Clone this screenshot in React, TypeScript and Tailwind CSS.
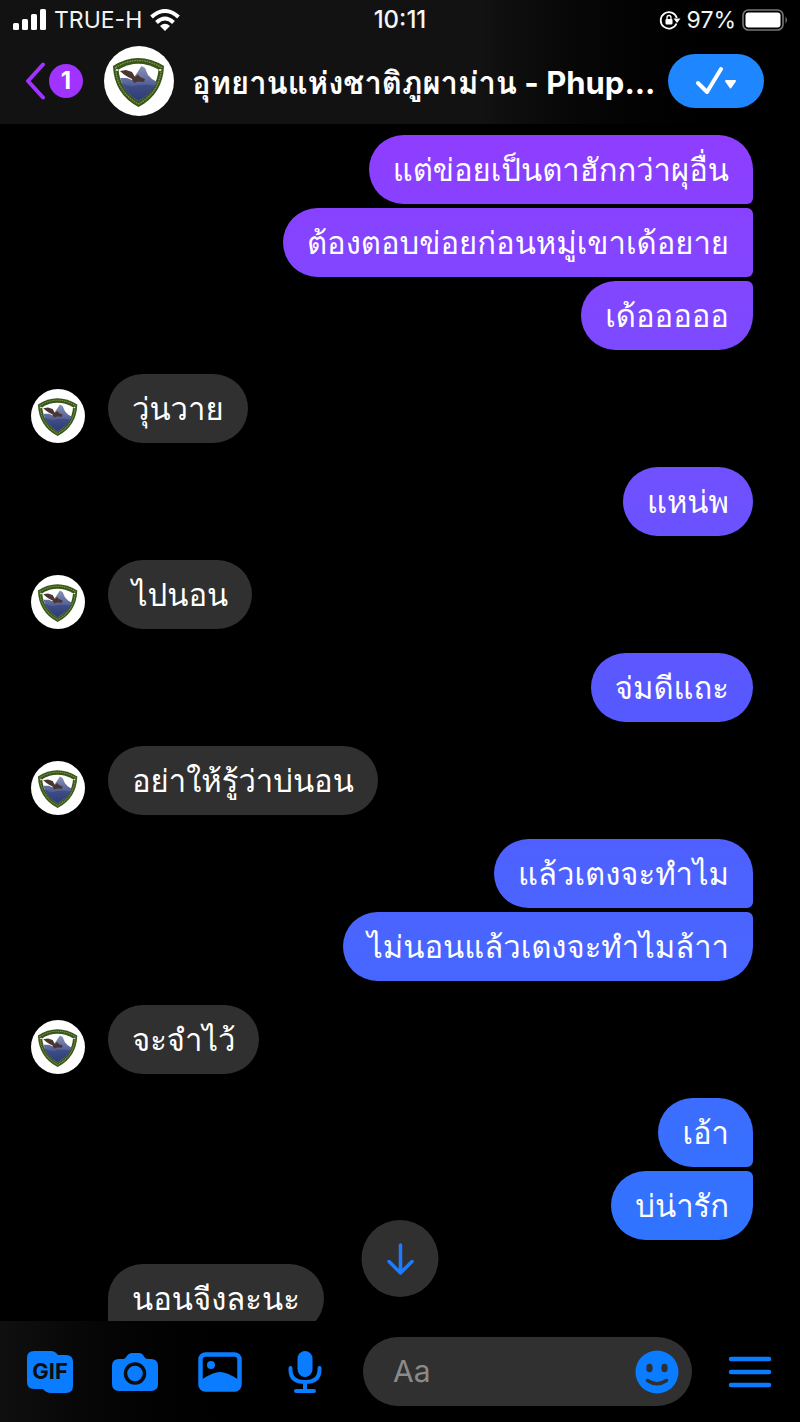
import { useId, type ReactNode } from 'react'

type Group = { from: 'me' | 'them'; messages: string[]; continues?: boolean }

const GROUPS: Group[] = [
  { from: 'me', messages: ['แต่ข่อยเป็นตาฮักกว่าผุอื่น', 'ต้องตอบข่อยก่อนหมู่เขาเด้อยาย', 'เด้อออออ'] },
  { from: 'them', messages: ['วุ่นวาย'] },
  { from: 'me', messages: ['แหน่พ'] },
  { from: 'them', messages: ['ไปนอน'] },
  { from: 'me', messages: ['จ่มดีแถะ'] },
  { from: 'them', messages: ['อย่าให้รู้ว่าบ่นอน'] },
  { from: 'me', messages: ['แล้วเตงจะทำไม', 'ไม่นอนแล้วเตงจะทำไมล้าา'] },
  { from: 'them', messages: ['จะจำไว้'] },
  { from: 'me', messages: ['เอ้า', 'บ่น่ารัก'] },
  // more messages of this group follow below the fold
  { from: 'them', messages: ['นอนจีงละนะ'], continues: true },
]

function ParkBadge({ className }: { className: string }) {
  const sky = useId()
  return (
    <svg viewBox="0 0 70 70" className={className} aria-hidden="true">
      <defs>
        <linearGradient id={sky} x1="0" y1="0" x2="0" y2="1">
          <stop offset="0" stopColor="#8b93b5" />
          <stop offset="0.450" stopColor="#5a689c" />
          <stop offset="1" stopColor="#26336b" />
        </linearGradient>
      </defs>
      <circle cx="35" cy="35" r="35" fill="#fff" />
      <path d="M9 20 Q34 4 60 20 Q59 48 34.500 61 Q10 48 9 20Z" fill="#35561c" />
      <path d="M11.500 21.500 Q34 7.500 57.500 21.500 Q56 46 34.500 58 Q13 46 11.500 21.500Z" fill="none" stroke="#8a9440" strokeWidth="1.300" strokeDasharray="1.600 0.900" />
      <path d="M14.500 23.500 Q34 12 54.500 23.500 Q53 44 34.500 55 Q16 44 14.500 23.500Z" fill="#fff" />
      <path d="M16 32 L23 32 L28 34 L33 27 L37.500 20 L41 22 L44 29 L48 33 L53 36 Q48 47 34.500 55 Q20 47 16 32Z" fill={`url(#${sky})`} />
      <path d="M17 37 Q26 42 34 39 Q44 38 52 40 Q47 48 34.500 55 Q22 48 17 37Z" fill="#33427d" opacity="0.600" />
      <path d="M16 25 L22 24 L28 26 L31 31 L34 28.500 L36 31 L41 33 L40 36 L34 35.500 L30 37 L28 33 L24 31 L20 28.500Z" fill="#4a3530" />
      <circle cx="13" cy="24" r="1" fill="#fff" />
      <circle cx="56" cy="24" r="1" fill="#fff" />
    </svg>
  )
}

function StatusBar() {
  return (
    <div className="grid grid-cols-3 items-center h-10 px-3 text-[23px] leading-10 text-gray-100">
      <div className="flex items-center gap-2">
        <svg viewBox="0 0 34 22" className="w-[34px] h-[22px]" fill="#fff" aria-hidden="true">
          <rect x="1" y="14" width="6" height="7" rx="1.500" />
          <rect x="10" y="10" width="6" height="11" rx="1.500" />
          <rect x="19" y="5" width="6" height="16" rx="1.500" />
          <rect x="28" y="0" width="6" height="21" rx="1.500" />
        </svg>
        <span>TRUE-H</span>
        <svg viewBox="0 0 30 22" className="w-[30px] h-[22px]" fill="none" stroke="#fff" strokeWidth="4" aria-hidden="true">
          <path d="M1.500 8 Q15 -4 28.500 8" />
          <path d="M6.500 13.500 Q15 5.500 23.500 13.500" />
          <path d="M10 17 Q15 12.500 20 17 L15 22Z" fill="#fff" stroke="none" />
        </svg>
      </div>
      <time className="text-center text-2xl leading-10 font-medium">10:11</time>
      <div className="flex items-center justify-end gap-1.5">
        <svg viewBox="0 0 22 20" className="w-[22px] h-5" aria-hidden="true">
          <path d="M17.500 13.500 A8.200 8.200 0 1 1 17.800 8" fill="none" stroke="#fff" strokeWidth="1.800" />
          <path d="M14.500 8.500 H21.500 L18 13Z" fill="#fff" />
          <rect x="6.500" y="9" width="7" height="5.500" rx="1" fill="#fff" />
          <path d="M8 9 V7.500 a2 2 0 0 1 4 0 V9" fill="none" stroke="#fff" strokeWidth="1.300" />
        </svg>
        <span>97%</span>
        <svg viewBox="0 0 46 22" className="w-[46px] h-[22px]" aria-hidden="true">
          <rect x="1" y="1" width="40" height="20" rx="5.500" fill="none" stroke="#777" strokeWidth="1.600" />
          <rect x="3.500" y="3.500" width="35" height="15" rx="3" fill="#fff" />
          <path d="M43.500 7.500 q3 3.500 0 7Z" fill="#777" />
        </svg>
      </div>
    </div>
  )
}

function Header() {
  return (
    <header className="shrink-0 bg-linear-to-r from-[#121212] from-60% to-black">
      <StatusBar />
      <div className="flex items-center h-[84px] pl-6 pr-9 pb-0.5">
        <a href="#chats" aria-label="Back to chats, 1 unread" className="flex items-center gap-1 shrink-0 text-[#a033ff]">
          <svg viewBox="0 0 21 38" className="w-[21px] h-[38px]" fill="none" stroke="currentColor" strokeWidth="4" strokeLinecap="round" strokeLinejoin="round" aria-hidden="true">
            <path d="M19 2.500 L4 19 L19 35.500" />
          </svg>
          <span className="flex items-center justify-center size-[34px] rounded-full bg-[#a033ff] text-2xl font-bold text-white">1</span>
        </a>
        <ParkBadge className="size-[70px] ml-[21px] shrink-0" />
        <h1 className="flex-1 min-w-0 ml-[18px] pt-1 whitespace-nowrap text-[31px] leading-[60px] font-bold text-white">
          อุทยานแห่งชาติภูผาม่าน - Phup...
        </h1>
        <button aria-label="Mark as done" className="flex items-center justify-center shrink-0 w-24 h-[54px] rounded-full bg-[#1e86ff]">
          <svg viewBox="0 0 42 30" className="w-[42px] h-[30px]" aria-hidden="true">
            <path d="M3 17 L12 26 L26 3" fill="none" stroke="#fff" strokeWidth="4" strokeLinecap="round" strokeLinejoin="round" />
            <path d="M31 15 H40 L35.500 21.500Z" fill="#fff" stroke="#fff" strokeWidth="2" strokeLinejoin="round" />
          </svg>
        </button>
      </div>
    </header>
  )
}

function bubbleCorners(group: Group, index: number) {
  const first = index === 0
  const last = index === group.messages.length - 1 && !group.continues
  if (group.from === 'me') {
    return `rounded-l-[35px] ${first ? 'rounded-tr-[35px]' : 'rounded-tr-md'} ${last ? 'rounded-br-[35px]' : 'rounded-br-md'}`
  }
  return `rounded-r-[35px] ${first ? 'rounded-tl-[35px]' : 'rounded-tl-md'} ${last ? 'rounded-bl-[35px]' : 'rounded-bl-md'}`
}

function MessageGroup({ group }: { group: Group }) {
  const mine = group.from === 'me'

  return (
    <li className={mine ? 'flex justify-end' : 'flex items-end'}>
      {!mine && (
        <div className="w-[77px] shrink-0">
          {!group.continues && <ParkBadge className="size-[54px]" />}
        </div>
      )}
      <div className={`flex flex-col gap-1 ${mine ? 'items-end' : 'items-start'}`}>
        {group.messages.map((text, i) => (
          <p
            key={text}
            className={`px-6 text-[31px] leading-[69px] whitespace-nowrap text-white ${bubbleCorners(group, i)} ${
              mine ? 'bg-fixed bg-linear-to-b from-[#9933ff] via-[#5659ff] to-[#0a7cff]' : 'bg-[#303030]'
            }`}
          >
            {text}
          </p>
        ))}
      </div>
    </li>
  )
}

function ToolButton({ label, children }: { label: string; children: ReactNode }) {
  return (
    <button aria-label={label} className="flex items-center justify-center shrink-0 min-w-12 text-[#0a7cff]">
      {children}
    </button>
  )
}

function Composer() {
  return (
    <footer className="flex items-center shrink-0 h-[101px] pl-[26px] pr-7 bg-linear-to-r from-[#101010] to-black to-40%">
      <div className="flex items-center gap-[37px]">
        <ToolButton label="Send a GIF">
          <svg viewBox="0 0 48 44" className="w-12 h-11">
            <path d="M8 1 H25 Q29 1 32 5 H40 Q47 5 47 12 V36 Q47 43 40 43 H25 Q20 43 17 39 H8 Q1 39 1 32 V8 Q1 1 8 1Z" fill="currentColor" />
            <text x="24" y="29" textAnchor="middle" fontSize="22" fontWeight="700" fill="#0d0d0d">GIF</text>
          </svg>
        </ToolButton>
        <ToolButton label="Open camera">
          <svg viewBox="0 0 48 40" className="w-12 h-10">
            <path d="M8 7 H12 Q14 7 15.500 4.500 Q17.500 1 21 1 H28 Q31.500 1 33 4.500 Q34.500 7 37 7 H40 Q47 7 47 14 V32 Q47 39 40 39 H8 Q1 39 1 32 V14 Q1 7 8 7Z" fill="currentColor" />
            <circle cx="24" cy="21.500" r="9.500" fill="none" stroke="#0d0d0d" strokeWidth="3.500" />
          </svg>
        </ToolButton>
        <ToolButton label="Choose a photo">
          <svg viewBox="0 0 44 40" className="w-11 h-10">
            <rect x="2.500" y="2.500" width="39" height="35" rx="5" fill="none" stroke="currentColor" strokeWidth="4.500" />
            <circle cx="13" cy="13" r="4" fill="currentColor" />
            <path d="M3 28 Q15 20 22 20 Q29 20 41 28 V37 H3Z" fill="currentColor" />
          </svg>
        </ToolButton>
        <ToolButton label="Record voice">
          <svg viewBox="0 0 44 44" className="w-11 h-11" fill="none" stroke="currentColor" strokeWidth="4" strokeLinecap="round">
            <rect x="14.500" y="1" width="15" height="26" rx="7.500" fill="currentColor" stroke="none" />
            <path d="M7.500 18 V20 Q7.500 32 22 32 Q36.500 32 36.500 20 V18 M22 32 V41 M13 41 H31" />
          </svg>
        </ToolButton>
      </div>
      <div className="flex items-center flex-1 min-w-0 h-[69px] ml-[34px] pl-[30px] pr-[11px] rounded-full bg-[#303030]">
        <input aria-label="Message" placeholder="Aa" className="flex-1 min-w-0 bg-transparent text-[30px] text-white placeholder:text-[#8a8a8a] outline-none" />
        <ToolButton label="Choose an emoji">
          <svg viewBox="0 0 44 44" className="size-11">
            <circle cx="22" cy="22" r="21.500" fill="currentColor" />
            <ellipse cx="14.500" cy="18" rx="3.200" ry="4.300" fill="#303030" />
            <ellipse cx="29.500" cy="18" rx="3.200" ry="4.300" fill="#303030" />
            <path d="M12.500 30.500 Q22 37 31.500 30.500" fill="none" stroke="#303030" strokeWidth="3.500" strokeLinecap="round" />
          </svg>
        </ToolButton>
      </div>
      <button aria-label="Menu" className="shrink-0 ml-9 text-[#0a7cff]">
        <svg viewBox="0 0 44 32" className="w-11 h-8" stroke="currentColor" strokeWidth="4.500" strokeLinecap="round">
          <path d="M3 3 H41 M3 16 H41 M3 29 H41" />
        </svg>
      </button>
    </footer>
  )
}

export default function App() {
  return (
    <div className="flex flex-col h-screen bg-black font-[Inter,Loma,Garuda,Umpush,Waree,'Noto_Sans_Thai_Looped',sans-serif]">
      <Header />
      <main className="relative flex-1 min-h-0 overflow-hidden">
        <ul className="flex flex-col gap-6 pt-[11px] pl-[31px] pr-[47px]">
          {GROUPS.map((group) => (
            <MessageGroup key={group.messages[0]} group={group} />
          ))}
        </ul>
        <button
          aria-label="Scroll to latest"
          className="absolute bottom-6 left-1/2 -translate-x-1/2 flex items-center justify-center size-[77px] rounded-full bg-[#303030]"
        >
          <svg viewBox="0 0 28 32" className="w-7 h-8" fill="none" stroke="#1d7bff" strokeWidth="3.500" strokeLinecap="round" strokeLinejoin="round">
            <path d="M14 2 V30 M2.500 18.500 L14 30 L25.500 18.500" />
          </svg>
        </button>
      </main>
      <Composer />
    </div>
  )
}
